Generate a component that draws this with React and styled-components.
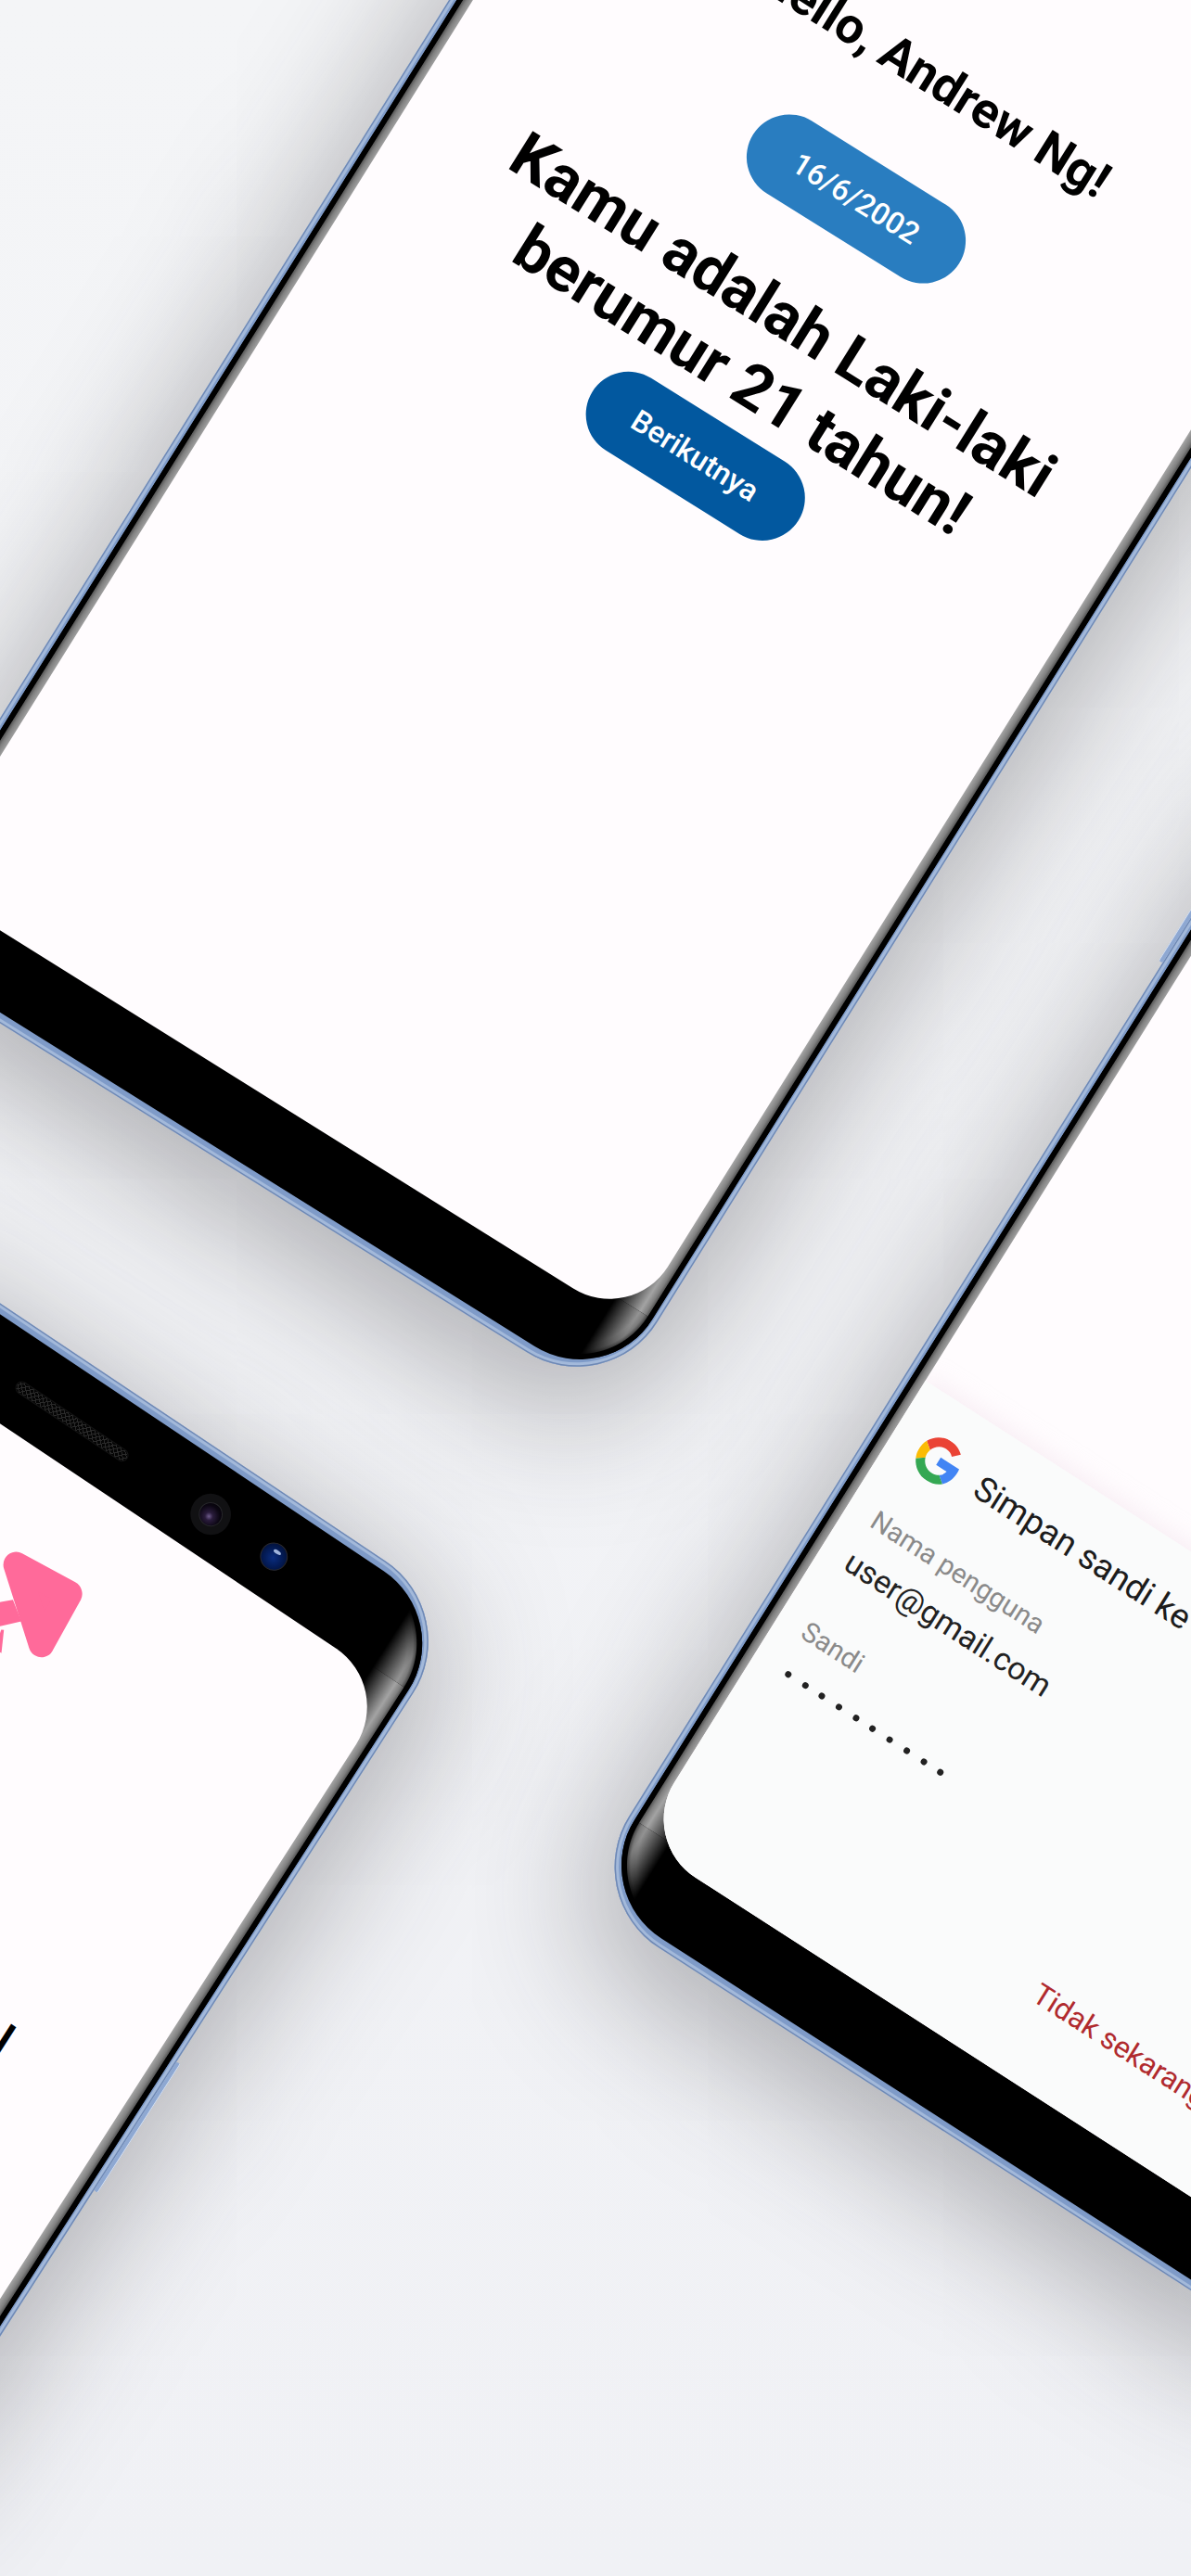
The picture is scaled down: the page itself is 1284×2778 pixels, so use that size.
import React from "react";
import styled, { createGlobalStyle } from "styled-components";

const Global = createGlobalStyle`
  html, body { margin: 0; padding: 0; background: #f1f2f6; }
  * { box-sizing: border-box; }
`;

const Canvas = styled.div`
  position: relative;
  width: 1284px;
  height: 2778px;
  overflow: hidden;
  background: linear-gradient(180deg, #f4f5f7 0%, #f0f1f5 100%);
  font-family: Roboto, "Noto Sans", sans-serif;
`;

const rad = (d) => (d * Math.PI) / 180;
const matrix = ({ $x, $y, $ax, $ay }) =>
  `matrix(${Math.cos(rad($ax))}, ${Math.sin(rad($ax))}, ${-Math.sin(rad($ay))}, ${Math.cos(rad($ay))}, ${$x}, ${$y})`;

const Body = styled.div`
  position: absolute;
  left: 0;
  top: 0;
  width: 946px;
  height: 2000px;
  padding: 10px 6.5px;
  border-radius: 102px;
  transform-origin: 0 0;
  transform: ${matrix};
  background: #7f9bc8;
  box-shadow:
    inset 0 0 0 1.5px #6f89b5,
    inset 0 0 0 4.5px #a3b9da,
    10px 30px 140px 20px rgba(50, 50, 55, 0.34);
`;

const SideKey = styled.div`
  position: absolute;
  top: ${(p) => p.$top}px;
  ${(p) => p.$side}: -5px;
  width: 5px;
  height: 165px;
  background: #8ea8d2;
  border-${(p) => p.$side}: 1.5px solid #d4e0f4;
  border-radius: 2px;
`;

const Bezel = styled.div`
  position: relative;
  height: 100%;
  padding: 98px 15.5px 75px;
  background: #000;
  border-radius: 92px;
  overflow: hidden;
`;

const stops = (dir) => `linear-gradient(to ${dir}, #000 0, #000 5.5px, #5a5a5a 6.3px, #808080 9.5px, #a2a2a2 15.5px, #a2a2a2 60px)`;
const cornerFill = "#989898 0, #939393 76px, #7a7a7a 82px, #4a4a4a 85.5px, #000 86.5px";

const Edge = styled.div`
  position: absolute;
  top: 0;
  bottom: 0;
  width: 50px;
  ${(p) => p.$side}: 0;
  background-repeat: no-repeat;
  background-image:
    radial-gradient(circle at ${(p) => (p.$side === "right" ? "-42px" : "92px")} 92px, ${cornerFill}),
    radial-gradient(circle at ${(p) => (p.$side === "right" ? "-42px" : "92px")} 0, ${cornerFill}),
    ${(p) => stops(p.$side === "right" ? "left" : "right")};
  background-size: 100% 92px, 100% 92px, 100% calc(100% - 184px);
  background-position: 0 0, 0 100%, 0 92px;
  mask-image: linear-gradient(to ${(p) => p.$side}, transparent 4px, #000 34px);
`;

const Sensors = styled.div`
  position: absolute;
  z-index: 2;
  top: 0;
  left: 399.5px;
  height: 106px;
  display: flex;
  align-items: center;
`;

const Speaker = styled.div`
  width: 144px;
  height: 14px;
  border-radius: 7px;
  margin-right: 86px;
  border: 1px solid #141414;
  background-color: #050505;
  background-image:
    repeating-linear-gradient(45deg, #2a2a2a 0 1px, transparent 1px 4px),
    repeating-linear-gradient(-45deg, #2a2a2a 0 1px, transparent 1px 4px);
`;

const Camera = styled.div`
  width: 44px;
  height: 44px;
  margin-right: 45px;
  border-radius: 50%;
  background: #111113;
  display: flex;
  align-items: center;
  justify-content: center;
`;

const Lens = styled.div`
  width: 26px;
  height: 26px;
  border-radius: 50%;
  border: 1px solid #26262a;
  background: radial-gradient(circle at 48% 62%, #6f5c8c 0, #2a1c3c 22%, #0b0612 60%, #000 100%);
`;

const Sensor = styled.div`
  width: 30px;
  height: 30px;
  border-radius: 50%;
  border: 1.5px solid #2a2a30;
  background: radial-gradient(circle at 50% 55%, #0a2d80 0, #041c58 45%, #010a24 100%);
  position: relative;
  &::after {
    content: "";
    position: absolute;
    left: 10px;
    top: 6px;
    width: 9px;
    height: 4px;
    border-radius: 50%;
    background: #9fb4dc;
  }
`;

const Screen = styled.div`
  position: relative;
  z-index: 1;
  height: 100%;
  border-radius: 74px;
  overflow: hidden;
  background: #fffcfe;
`;

const Greeting = styled.div`
  display: flex;
  flex-direction: column;
  align-items: center;
  padding: 462px 0 0 25px;
`;

const Hello = styled.h2`
  margin: 0 0 77px 7px;
  font: 700 54px/64px Roboto, sans-serif;
  color: #000;
  white-space: nowrap;
`;

const Pill = styled.div`
  width: 262px;
  height: 92px;
  border-radius: 46px;
  display: flex;
  align-items: center;
  justify-content: center;
  font: 500 32.5px/40px Roboto, sans-serif;
  color: #fff;
  background: ${(p) => p.$bg};
`;

const Heading = styled.h1`
  margin: 61px 0 8px;
  font: 700 68px/83px Roboto, sans-serif;
  color: #000;
  text-align: center;
  white-space: nowrap;
`;

const ArrowMark = styled.svg`
  position: absolute;
  left: 458px;
  top: 92px;
  width: 130px;
  height: 130px;
`;

const CutWord = styled.span`
  position: absolute;
  left: 749px;
  top: 527px;
  font: 700 46px/1 Roboto, sans-serif;
  color: #000;
`;

const Sheet = styled.div`
  position: absolute;
  left: 0;
  right: 0;
  bottom: 0;
  height: 585px;
  display: flex;
  flex-direction: column;
  padding: 40px 47px 77px 31px;
  background: #fafbfb;
  box-shadow: 0 -6px 24px rgba(235, 215, 225, 0.35);
`;

const SheetHead = styled.div`
  display: flex;
  align-items: center;
  gap: 24px;
  height: 50px;
  padding-left: 2px;
  white-space: nowrap;
`;

const SheetTitle = styled.span`
  font: 400 37px/42px Roboto, sans-serif;
  color: #1c1c1c;
`;

const FieldLabel = styled.div`
  margin-top: ${(p) => p.$top}px;
  font: 400 29.5px/36px Roboto, sans-serif;
  color: #8a8a8a;
`;

const FieldValue = styled.div`
  margin-top: 13px;
  font: 400 34.2px/42px Roboto, sans-serif;
  color: #222;
`;

const Dots = styled.div`
  display: flex;
  gap: 14.7px;
  margin: 29px 0 0 8px;
`;

const Dot = styled.i`
  width: 7px;
  height: 7px;
  border-radius: 50%;
  background: #222;
`;

const SheetFoot = styled.div`
  margin: auto 0 0 419px;
  font: 400 32px/38px Roboto, sans-serif;
  color: #b02a2e;
  white-space: nowrap;
`;

function Phone({ x, y, ax, ay, keyTop, keySide, children }) {
  return (
    <Body $x={x} $y={y} $ax={ax} $ay={ay}>
      {keySide && <SideKey $side={keySide} $top={keyTop} />}
      <Bezel>
        <Edge $side="left" />
        <Edge $side="right" />
        <Sensors>
          <Speaker />
          <Camera><Lens /></Camera>
          <Sensor />
        </Sensors>
        <Screen>{children}</Screen>
      </Bezel>
    </Body>
  );
}

const GoogleG = () => (
  <svg width="50" height="50" viewBox="0 0 48 48" style={{ flex: "none" }}>
    <path fill="#EA4335" d="M24 9.5c3.54 0 6.71 1.22 9.21 3.6l6.85-6.85C35.9 2.38 30.47 0 24 0 14.62 0 6.51 5.38 2.56 13.22l7.98 6.19C12.43 13.72 17.74 9.5 24 9.5z" />
    <path fill="#4285F4" d="M46.98 24.55c0-1.57-.15-3.09-.38-4.55H24v9.02h12.94c-.58 2.96-2.26 5.48-4.78 7.18l7.73 6c4.51-4.18 7.09-10.36 7.09-17.65z" />
    <path fill="#FBBC05" d="M10.53 28.59c-.48-1.45-.76-2.99-.76-4.59s.27-3.14.76-4.59l-7.98-6.19C.92 16.46 0 20.12 0 24c0 3.88.92 7.54 2.56 10.78l7.97-6.19z" />
    <path fill="#34A853" d="M24 48c6.48 0 11.93-2.13 15.89-5.81l-7.73-6c-2.15 1.45-4.92 2.3-8.16 2.3-6.26 0-11.57-4.22-13.47-9.91l-7.98 6.19C6.51 42.62 14.62 48 24 48z" />
  </svg>
);

export default function App() {
  return (
    <Canvas>
      <Global />
      <Phone x={912} y={-685} ax={32} ay={32}>
        <Greeting>
          <Hello>Hello, Andrew Ng!</Hello>
          <Pill $bg="#297dc0">16/6/2002</Pill>
          <Heading>Kamu adalah Laki-laki<br />berumur 21 tahun!</Heading>
          <Pill $bg="#02589f">Berikutnya</Pill>
        </Greeting>
      </Phone>

      <Phone x={-285.6} y={1214} ax={33.8} ay={32.7} keySide="right" keyTop={574}>
        <ArrowMark viewBox="0 0 130 130">
          <polygon points="31,25 96,19 100,81" fill="#ff6a9a" stroke="#ff6a9a" strokeWidth="28" strokeLinejoin="round" />
          <polygon points="48.4,58.3 38.7,67.2 10,96 25,116 53,88.9 68.6,72.5" fill="#ff6a9a" />
          <polygon points="55.2,92.2 57.7,90.6 69,113 60,113" fill="#ff6a9a" />
        </ArrowMark>
        <CutWord>l</CutWord>
      </Phone>

      <Phone x={1684} y={349} ax={32.8} ay={32} keySide="left" keyTop={648}>
        <Sheet>
          <SheetHead>
            <GoogleG />
            <SheetTitle>Simpan sandi ke Google?</SheetTitle>
          </SheetHead>
          <FieldLabel $top={47}>Nama pengguna</FieldLabel>
          <FieldValue>user@gmail.com</FieldValue>
          <FieldLabel $top={50}>Sandi</FieldLabel>
          <Dots>{Array.from({ length: 10 }, (_, i) => <Dot key={i} />)}</Dots>
          <SheetFoot>Tidak sekarang</SheetFoot>
        </Sheet>
      </Phone>
    </Canvas>
  );
}
